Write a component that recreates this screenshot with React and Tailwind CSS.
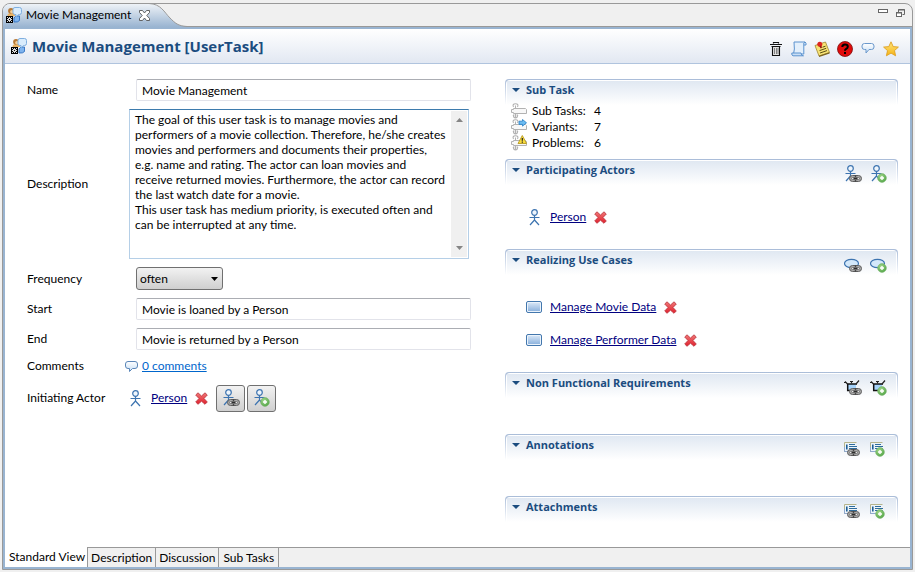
import React from 'react';

const BODY_FONT = 'font-[Lato,sans-serif]';
const HEADING_FONT = "font-['Open_Sans','Noto_Sans',sans-serif]";

function Defs() {
  return (
    <svg className="absolute h-0 w-0" aria-hidden="true">
      <defs>
        <linearGradient id="tab" x1="0" y1="0" x2="0" y2="1">
          <stop offset="0" stopColor="#eef2f7" />
          <stop offset="1" stopColor="#99b4d1" />
        </linearGradient>
        <linearGradient id="box" x1="0" y1="0" x2="0" y2="1">
          <stop offset="0" stopColor="#d3e3f5" />
          <stop offset="1" stopColor="#8fb4de" />
        </linearGradient>
        <linearGradient id="bubble" x1="0" y1="0" x2="0" y2="1">
          <stop offset="0" stopColor="#ffffff" />
          <stop offset="1" stopColor="#c6def5" />
        </linearGradient>
        <linearGradient id="cross" x1="0" y1="0" x2="0" y2="1">
          <stop offset="0" stopColor="#f07878" />
          <stop offset="1" stopColor="#e01f2c" />
        </linearGradient>
        <linearGradient id="star" x1="0" y1="0" x2="0" y2="1">
          <stop offset="0" stopColor="#ffe680" />
          <stop offset="1" stopColor="#f5b312" />
        </linearGradient>
        <radialGradient id="plus" cx="0.4" cy="0.35" r="0.7">
          <stop offset="0" stopColor="#a5d98f" />
          <stop offset="1" stopColor="#4fa344" />
        </radialGradient>
      </defs>
    </svg>
  );
}

function Icon({ w = 16, h = 16, children, className = '' }) {
  return (
    <svg width={w} height={h} viewBox={`0 0 ${w} ${h}`} className={`shrink-0 ${className}`} aria-hidden="true">
      {children}
    </svg>
  );
}

function TaskIcon() {
  return (
    <Icon w={16} h={16}>
      <path d="M10 9 H13.5 V13.5 Q12 15.5 8 15 V11 Z" fill="#7fb4ee" stroke="#2f6fc0" strokeWidth="0.9" />
      <path d="M1.5 9 Q1.5 6 4.5 6 H7.5 Q9 7 9 9 Z" fill="#e8b264" />
      <circle cx="5" cy="3.8" r="2.9" fill="#b97a35" />
      <circle cx="5.9" cy="4.8" r="1.8" fill="#f2cd98" />
      <path d="M9 0.5 H13.5 Q15.5 0.5 15.5 2.5 V5.5 Q15.5 7.5 13.5 7.5 H12.5 L10 9.8 V7.5 H9 Q7 7.5 7 5.5 V2.5 Q7 0.5 9 0.5 Z" fill="#d9ecfc" stroke="#7fafdf" />
      <rect x="0" y="9" width="7" height="7" fill="#000" />
      <path d="M3 10 H4 V11 H3 Z M3 14 H4 V15 H3 Z M1 12 H6 V13 H1 Z M1 10 H2 V11 H1 Z M5 10 H6 V11 H5 Z M1 14 H2 V15 H1 Z M5 14 H6 V15 H5 Z M2 11 H5 V14 H2 Z" fill="#fff" fillOpacity="0.85" />
      <path d="M3 12 H4 V13 H3 Z" fill="#000" />
    </Icon>
  );
}

function Plus({ x, y }) {
  return (
    <g>
      <circle cx={x} cy={y} r="4.4" fill="url(#plus)" stroke="#7fb873" strokeWidth="0.6" />
      <path d={`M${x} ${y - 2} V${y + 2} M${x - 2} ${y} H${x + 2}`} stroke="#fff" strokeWidth="1.4" />
    </g>
  );
}

function Chain({ x, y }) {
  return (
    <g fill="none">
      <rect x={x + 0.5} y={y + 0.5} width="12" height="6" rx="3" fill="#a8a8a8" stroke="#5e5e5e" />
      <path d={`M${x + 6.5} ${y} V${y + 2} M${x + 6.5} ${y + 5} V${y + 7}`} stroke="#4a4a4a" strokeWidth="1.4" />
      <rect x={x + 2.5} y={y + 2.5} width="8" height="2" rx="1" fill="#e8e8e8" stroke="#6a6a6a" strokeWidth="0.8" />
      <path d={`M${x + 4.5} ${y + 3.5} H${x + 8.5}`} stroke="#2c2c2c" strokeWidth="1.4" />
    </g>
  );
}

const actorShape = (
  <g fill="none" stroke="#3d74b0" strokeWidth="1.2">
    <circle cx="6.5" cy="3.5" r="2.8" fill="#eef5fc" />
    <path d="M6.5 6.5 V11 M1.5 8.5 H11.5 M6.5 11 L2 16 M6.5 11 L11 16" />
  </g>
);
const ovalShape = <ellipse cx="7.5" cy="8.5" rx="7" ry="4.2" fill="#d3e8fa" stroke="#3d74b0" strokeWidth="1.2" />;
const nfrShape = (
  <g>
    <rect x="4" y="6" width="8" height="7" fill="#a5d2fa" />
    <path d="M3 6 H13 M3.7 6 V12.5 H8" stroke="#111" strokeWidth="1.5" fill="none" />
    <path d="M1 3.5 L3.5 6 M0 4.5 H2 M15 2.5 L12 6 M7.5 3 V5.5 M6 3.5 H9" stroke="#222" strokeWidth="1.2" fill="none" />
  </g>
);
const noteShape = (
  <g>
    <rect x="0.5" y="2.5" width="11" height="9" fill="#eef5fa" />
    <path d="M0.5 12 V2.5 H12.5" fill="none" stroke="#b5b48c" />
    <path d="M0.5 7 V11.5 H6" fill="none" stroke="#8fa9cf" />
    <path d="M2.8 4.5 V9.5" stroke="#1e5f95" strokeWidth="1.6" />
    <path d="M5 4.5 H11 M5 6.5 H13 M5 8.5 H13" stroke="#2e6c9c" />
  </g>
);

const shapes = { actor: actorShape, oval: ovalShape, nfr: nfrShape, note: noteShape };

function ActionIcon({ shape, kind }) {
  const note = shape === 'note';
  return (
    <Icon w={18} h={18}>
      {shapes[shape]}
      {kind === 'link' ? <Chain x={note ? 3 : 5} y={note ? 9 : 10} /> : <Plus x={note ? 10 : 12} y={note ? 12 : 13} />}
    </Icon>
  );
}

function ActorIcon() {
  return <Icon w={13} h={17}>{actorShape}</Icon>;
}

function DeleteButton({ label }) {
  return (
    <button type="button" aria-label={label} className="flex">
      <Icon w={13} h={13}>
        <path d="M3 0.8 L6.5 4 L10 0.8 L12.3 3 L9 6.5 L12.3 10 L10 12.3 L6.5 9.2 L3 12.3 L0.7 10 L4 6.5 L0.7 3 Z" fill="url(#cross)" stroke="#b8343c" strokeWidth="0.8" strokeLinejoin="round" />
      </Icon>
    </button>
  );
}

function BoxIcon() {
  return (
    <Icon w={16} h={12}>
      <rect x="0.5" y="0.5" width="15" height="11" rx="1.5" fill="#eaf3fc" stroke="#4377ad" />
      <rect x="2" y="2" width="12" height="8" fill="url(#box)" />
    </Icon>
  );
}

function CommentIcon() {
  return (
    <Icon w={13} h={13}>
      <path d="M3 1.5 H10 Q12.5 1.5 12.5 4 V6 Q12.5 8.5 10 8.5 H7.5 L4.5 11.5 V8.5 H3 Q0.5 8.5 0.5 6 V4 Q0.5 1.5 3 1.5 Z" fill="url(#bubble)" stroke="#5b86b8" strokeLinejoin="round" />
    </Icon>
  );
}

function SubTaskIcon({ badge }) {
  return (
    <Icon>
      <path d="M4.5 2.5 V15 M2.5 4 Q1 0.8 4.5 0.8 Q8 0.8 6.5 4 M2 12 H3.5 M5.5 12 H7 M2.3 12 Q2.5 15 4.5 15 Q6.5 15 6.7 12" fill="none" stroke="#b2b2b2" strokeWidth="1.1" />
      <path d="M0.5 6.5 H2.5 V5.5 H14.5 L15.5 6.5 V10.5 H2.5 V9.5 H0.5 Z" fill="#f8f8f8" stroke="#b2b2b2" strokeLinejoin="round" />
      {badge === 'arrow' && <path d="M8 2.2 H11.5 V0.5 L15.5 3.8 L11.5 7.1 V5.4 H8 Z" fill="#6cbcf2" stroke="#2f86c9" strokeWidth="0.9" />}
      {badge === 'warn' && (
        <g>
          <path d="M11.3 0.5 L15.6 8.5 H7 Z" fill="#f8dc3c" stroke="#b89b22" strokeWidth="0.9" strokeLinejoin="round" />
          <path d="M11.3 3 V5.8 M11.3 6.6 V7.8" stroke="#222" strokeWidth="1.2" />
        </g>
      )}
    </Icon>
  );
}

const toolIcons = [
  ['Delete', (
    <g key="t" fill="none" stroke="#111">
      <path d="M5.5 2.5 V1.5 H10.5 V2.5 M2 3.5 H14" strokeWidth="1.2" />
      <path d="M3.5 5.5 H12.5 M4.5 5.5 V14.5 H11.5 V5.5" fill="#e0e0e0" strokeWidth="1.1" />
      <path d="M6.5 7 V13 M8.5 7 V13 M10 7 V13" stroke="#777" strokeWidth="0.9" />
    </g>
  )],
  ['Document', (
    <g key="d" fill="#e3effb" stroke="#5c93cf">
      <path d="M3 1 H14 Q15.5 1.5 15 4 H12.8 V13 H2.5 Q4 9 3 1 Z" />
      <path d="M0.8 12 H10 Q10 14.8 12.5 14.8 H2 Q0.5 14.5 0.8 12 Z" fill="#c9def5" />
      <path d="M12.8 4 Q12.3 1.5 14 1" fill="none" />
    </g>
  )],
  ['Note', (
    <g key="n">
      <path d="M1 4.5 L11.5 1 L15.5 11.5 L5 15 Z" fill="#f8e474" stroke="#a8903c" strokeWidth="0.9" />
      <path d="M5 15.3 L15.5 11.8" fill="none" stroke="#7d6520" strokeWidth="1.3" />
      <path d="M8.5 6.2 L11.5 5.2 M5.5 9.6 L12.2 7.3 M6 12 L13 9.6" stroke="#5b4d15" />
      <circle cx="5.8" cy="3.2" r="2.5" fill="#dd261f" />
      <path d="M6 5 L7.5 6.8" stroke="#8c1511" strokeWidth="1.8" />
    </g>
  )],
  ['Help', (
    <g key="h">
      <circle cx="8" cy="8" r="7.5" fill="#e00a0a" stroke="#7d0c0c" strokeWidth="0.8" />
      <path d="M5.3 6 Q5.3 3.5 8 3.5 Q10.8 3.5 10.8 5.8 Q10.8 7.2 9 8 Q8 8.6 8 9.8" fill="none" stroke="#000" strokeWidth="2" />
      <rect x="7" y="11" width="2" height="2" fill="#000" />
    </g>
  )],
  ['Comment', (
    <path key="c" d="M4.5 2.5 H11.5 Q14 2.5 14 5 V6 Q14 8.5 11.5 8.5 H9 L6 12 V8.5 H4.5 Q2 8.5 2 6 V5 Q2 2.5 4.5 2.5 Z" fill="url(#bubble)" stroke="#6a98cc" strokeLinejoin="round" />
  )],
  ['Favourite', (
    <path key="s" d="M8 0.8 L10.2 5.6 L15.4 6.1 L11.5 9.6 L12.6 14.8 L8 12.1 L3.4 14.8 L4.5 9.6 L0.6 6.1 L5.8 5.6 Z" fill="url(#star)" stroke="#dfa024" strokeWidth="0.9" strokeLinejoin="round" />
  )],
];

function Section({ title, shape, children, height }) {
  return (
    <section className={height}>
      <div className="rounded-t bg-linear-to-b from-[#a9bcd8] to-white px-px pt-px">
        <div className="rounded-t bg-white px-px pt-px">
          <div className="flex h-6 items-start justify-between bg-linear-to-b from-[#e0e8f2] to-white pr-2 pl-[5px]">
            <button type="button" className={`flex h-[18px] items-center gap-1.5 text-[11px] font-bold text-[#1b4c7f] ${HEADING_FONT}`}>
              <Icon w={8} h={4}><path d="M0 0 H8 L4 4 Z" fill="#1b4c7f" /></Icon>
              <h2>{title}</h2>
            </button>
            {shape && (
              <div className="flex gap-2 pt-1">
                <button type="button" aria-label={`Link ${title}`}><ActionIcon shape={shape} kind="link" /></button>
                <button type="button" aria-label={`Add ${title}`}><ActionIcon shape={shape} kind="add" /></button>
              </div>
            )}
          </div>
        </div>
      </div>
      {children}
    </section>
  );
}

function ItemLink({ icon, name }) {
  return (
    <div className="flex h-4 items-center gap-2">
      <span className="flex w-4 justify-center">{icon}</span>
      <a href="#item" className="text-[#000080] underline">{name}</a>
      <DeleteButton label={`Remove ${name}`} />
    </div>
  );
}

const description = `The goal of this user task is to manage movies and
performers of a movie collection. Therefore, he/she creates
movies and performers and documents their properties,
e.g. name and rating. The actor can loan movies and
receive returned movies. Furthermore, the actor can record
the last watch date for a movie.
This user task has medium priority, is executed often and
can be interrupted at any time.`;

const inputClass = 'ml-[7px] h-[22px] min-w-0 rounded-[2px] border border-[#e2e3ea] border-t-[#abadb3] bg-white px-[5px] outline-none';
const squareButton = 'flex h-[27px] w-[29px] items-center justify-center rounded-[3px] border border-[#707070] bg-linear-to-b from-[#f2f2f2] to-[#cfcfcf]';

function TaskForm() {
  return (
    <form className="grid grid-cols-[102px_minmax(0,1fr)] content-start items-center gap-y-2">
      <label htmlFor="name">Name</label>
      <input id="name" className={inputClass} defaultValue="Movie Management" />

      <label htmlFor="description">Description</label>
      <div className="mr-0.5 flex h-[150px] border border-[#b5cfe7] border-t-[#3d7bad] p-px">
        <textarea id="description" className="min-w-0 grow resize-none overflow-hidden whitespace-pre pl-1 pt-px leading-[15px] outline-none" defaultValue={description} />
        <div className="flex w-4 shrink-0 flex-col items-center justify-between bg-[#f0f0f0] py-[7px]">
          <Icon w={7} h={4}><path d="M0 4 L3.5 0 L7 4 Z" fill="#858585" /></Icon>
          <Icon w={7} h={4}><path d="M0 0 L3.5 4 L7 0 Z" fill="#858585" /></Icon>
        </div>
      </div>

      <label htmlFor="frequency">Frequency</label>
      <div className="relative ml-[7px] w-[87px]">
        <select id="frequency" className="block h-[23px] w-full appearance-none rounded-[3px] border border-[#707070] bg-linear-to-b from-[#f2f2f2] to-[#cfcfcf] pl-[3px]">
          <option>often</option>
        </select>
        <svg width="7" height="4" viewBox="0 0 7 4" className="pointer-events-none absolute top-2.5 right-[5px]" aria-hidden="true">
          <path d="M0 0 H7 L3.5 4 Z" fill="#000" />
        </svg>
      </div>

      <label htmlFor="start">Start</label>
      <input id="start" className={inputClass} defaultValue="Movie is loaned by a Person" />

      <label htmlFor="end">End</label>
      <input id="end" className={inputClass} defaultValue="Movie is returned by a Person" />

      <span>Comments</span>
      <div className="-ml-1 flex h-4 items-center gap-1">
        <CommentIcon />
        <a href="#comments" className="text-[#0066cc] underline">0 comments</a>
      </div>

      <span>Initiating Actor</span>
      <div className="-ml-0.5 flex h-8 items-center gap-2">
        <ItemLink icon={<ActorIcon />} name="Person" />
        <div className="flex gap-0.5">
          <button type="button" aria-label="Link actor" className={squareButton}><ActionIcon shape="actor" kind="link" /></button>
          <button type="button" aria-label="Add actor" className={squareButton}><ActionIcon shape="actor" kind="add" /></button>
        </div>
      </div>
    </form>
  );
}

function Stats() {
  const rows = [['Sub Tasks:', 4, null], ['Variants:', 7, 'arrow'], ['Problems:', 6, 'warn']];
  return (
    <dl className="-mt-0.5 pl-1.5">
      {rows.map(([label, value, badge]) => (
        <div key={label} className="flex h-4 items-center">
          <SubTaskIcon badge={badge} />
          <dt className="w-[67px] shrink-0 pl-[5px] whitespace-nowrap">{label}</dt>
          <dd>{value}</dd>
        </div>
      ))}
    </dl>
  );
}

function Sections() {
  return (
    <div>
      <Section title="Sub Task" height="h-20"><Stats /></Section>
      <Section title="Participating Actors" shape="actor" height="h-[90px]">
        <div className="pt-6 pl-[21px]"><ItemLink icon={<ActorIcon />} name="Person" /></div>
      </Section>
      <Section title="Realizing Use Cases" shape="oval" height="h-[123px]">
        <div className="flex flex-col gap-[17px] pt-6 pl-[21px]">
          <ItemLink icon={<BoxIcon />} name="Manage Movie Data" />
          <ItemLink icon={<BoxIcon />} name="Manage Performer Data" />
        </div>
      </Section>
      <Section title="Non Functional Requirements" shape="nfr" height="h-[62px]" />
      <Section title="Annotations" shape="note" height="h-[62px]" />
      <Section title="Attachments" shape="note" height="h-[50px]" />
    </div>
  );
}

export default function App() {
  return (
    <div className={`flex h-screen flex-col bg-[#f0f0f0] pt-[3px] pr-0.5 pb-0.5 pl-0.5 text-xs leading-4 text-black ${BODY_FONT}`}>
      <Defs />
      <div className="flex min-h-0 grow flex-col overflow-hidden rounded-t-lg border border-[#999999]">
        <div className="relative flex h-[23px] shrink-0 items-center justify-between border-b border-[#999999]">
          <svg width="184" height="23" viewBox="0 0 184 23" className="absolute top-0 left-0" aria-hidden="true">
            <path d="M0 0 H146 C158 0 161 8 167 14 C172 19 175 22 184 22.5 V23 H0 Z" fill="url(#tab)" />
            <path d="M146 -0.5 C158 0 161 8 167 14 C172 19 175 22 184 22.5" fill="none" stroke="#999" />
          </svg>
          <div className="relative flex items-center pl-[3px]">
            <TaskIcon />
            <span className="pl-1">Movie Management</span>
            <button type="button" aria-label="Close" className="pl-2">
              <Icon w={11} h={11}>
                <path d="M0.5 0.5 H3.5 L5.5 3 L7.5 0.5 H10.5 V2.5 L7.8 5.5 L10.5 8.5 V10.5 H7.5 L5.5 8 L3.5 10.5 H0.5 V8.5 L3.2 5.5 L0.5 2.5 Z" fill="#fff" stroke="#555" strokeWidth="0.9" />
              </Icon>
            </button>
          </div>
          <div className="flex items-center gap-2 pr-[7px] pb-1">
            <button type="button" aria-label="Minimize">
              <Icon w={10} h={10}><rect x="0.5" y="1.5" width="9" height="3" fill="#fff" stroke="#666" /></Icon>
            </button>
            <button type="button" aria-label="Restore">
              <Icon w={9} h={9}>
                <path d="M2.5 4 V0.5 H8.5 V5.5 H6.5 M2 1 H9" fill="none" stroke="#666" />
                <rect x="0.5" y="3.5" width="5" height="4" fill="#fff" stroke="#666" />
                <path d="M0 4 H6" stroke="#666" />
              </Icon>
            </button>
          </div>
        </div>

        <div className="flex min-h-0 grow flex-col bg-[#99b4d1] px-0.5 pt-0.5 pb-0.5">
          <header className="flex h-[35px] shrink-0 items-center justify-between border-b border-[#b0c4de] bg-linear-to-b from-white to-[#e2e8f2] pr-[11px] pl-1.5">
            <div className="flex items-center gap-[5px]">
              <TaskIcon />
              <h1 className={`text-[15px] font-bold text-[#1b4c7f] ${HEADING_FONT}`}>Movie Management [UserTask]</h1>
            </div>
            <div className="flex gap-[7px] pt-1.5">
              {toolIcons.map(([label, drawing]) => (
                <button key={label} type="button" aria-label={label}><Icon>{drawing}</Icon></button>
              ))}
            </div>
          </header>

          <main className="grid min-h-0 grow grid-cols-[minmax(0,444fr)_minmax(0,393fr)] gap-[34px] overflow-hidden bg-white pt-[15px] pr-3 pl-[22px]">
            <TaskForm />
            <Sections />
          </main>

          <nav className="flex h-5 shrink-0 bg-[#f0f0f0]">
            <button type="button" className="border-r border-[#999999] bg-white pr-0.5 pl-1">Standard View</button>
            <button type="button" className="border-t border-r border-[#999999] px-[3px]">Description</button>
            <button type="button" className="border-t border-r border-[#999999] px-[3px]">Discussion</button>
            <button type="button" className="border-t border-r border-[#999999] px-1">Sub Tasks</button>
            <div className="grow border-t border-[#999999]" />
          </nav>
        </div>
      </div>
    </div>
  );
}
